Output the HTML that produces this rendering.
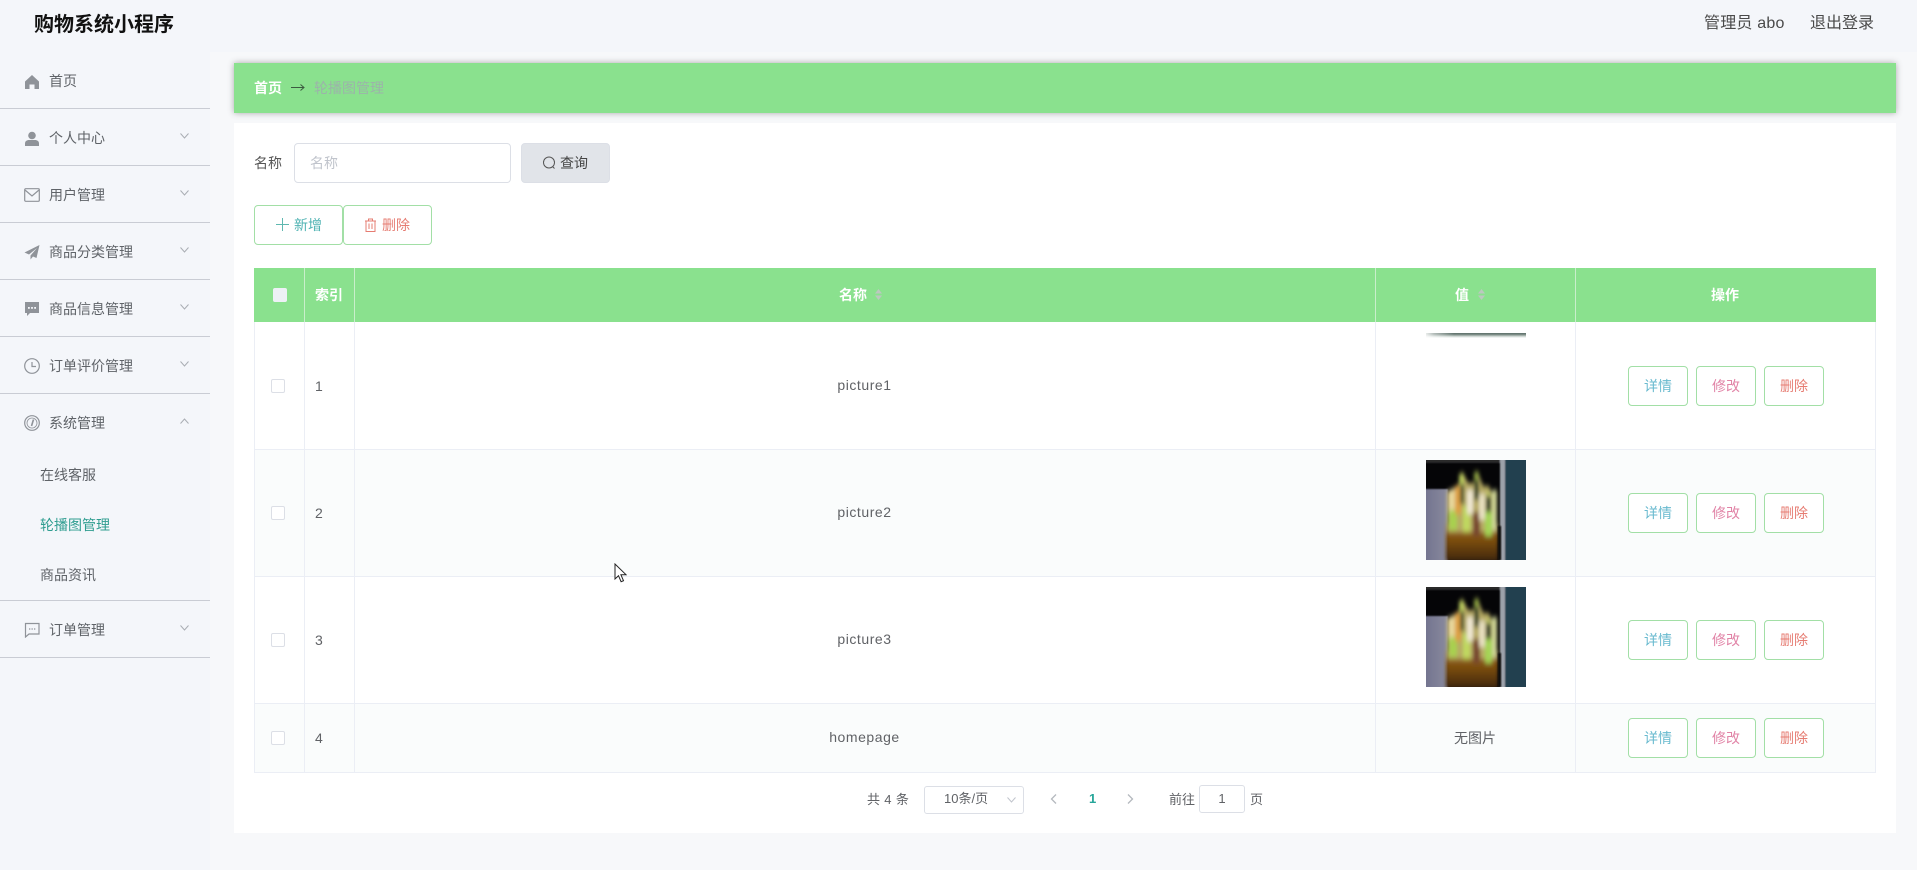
<!DOCTYPE html>
<html lang="zh"><head><meta charset="utf-8"><title>轮播图管理</title>
<style>
*{box-sizing:border-box}
html,body{margin:0;padding:0;width:1917px;height:870px;overflow:hidden;background:#f4f6fa;font-family:"Liberation Sans","Noto Sans CJK SC",sans-serif}
div,span,svg{position:absolute}
.t{white-space:nowrap;height:20px;line-height:20px;font-size:14px;color:#606266}
.c{text-align:center}
.lat{letter-spacing:.55px}
.m{left:49px;color:#5f6368}
.l{left:0;width:210px;height:1px;background:#c9ccd4}
.ic{left:24px;width:16px;height:16px;fill:#8f9399}
.ico{left:24px;width:16px;height:16px;fill:none;stroke:#8f9399;stroke-width:1.2}
.ch{left:180px;width:9px;height:6px;fill:none;stroke:#a9adb3;stroke-width:1}
.s{left:40px;color:#5f6368}
.v{width:1px;background:#ebeef5}
.h{left:254px;width:1622px;height:1px;background:#ebeef5}
.cb{left:271px;width:14px;height:14px;border:1px solid #dcdfe6;border-radius:2px;background:#fff}
.n{left:315px}
.b{width:60px;height:40px;border:1px solid #a2dfa6;border-radius:4px;background:#fff;text-align:center;line-height:38px;font-size:14px}
.b1{left:1628px;color:#69bacf}.b2{left:1696px;color:#e183a6}.b3{left:1764px;color:#e67c72}
.w{color:#fff;font-weight:700}
.sort{width:9px;height:11px;fill:#bcc8c0}
</style></head><body>
<svg width="0" height="0" style="left:0;top:0"><defs>
<filter id="bl" x="-20%" y="-20%" width="140%" height="140%"><feGaussianBlur stdDeviation="1.8 2.6"/></filter>
<filter id="bs" x="-20%" y="-20%" width="140%" height="140%"><feGaussianBlur stdDeviation="0.7"/></filter>
<linearGradient id="gy" x1="0" y1="0" x2="1" y2="0"><stop offset="0" stop-color="#71728e"/><stop offset="1" stop-color="#8a8b9e"/></linearGradient>
<linearGradient id="bw" x1="0" y1="0" x2="0" y2="1"><stop offset="0" stop-color="#a06a18"/><stop offset=".5" stop-color="#74480f"/><stop offset="1" stop-color="#3c2408"/></linearGradient>
<g id="food"><rect width="100" height="100" fill="#050507"/>
<g filter="url(#bs)"><rect x="-2" y="29" width="24" height="73" fill="url(#gy)"/><rect x="-2" y="-2" width="76" height="5" fill="#2a2a2c"/><rect x="74" y="-2" width="6" height="104" fill="#9da2aa"/><rect x="79" y="-2" width="23" height="104" fill="#23414f"/></g>
<g filter="url(#bl)"><rect x="20" y="64" width="52" height="38" fill="url(#bw)"/>
<path d="M21 32l12-8 3-13 6 12 6 0 3-13 6 16 6 0 2 6 6 4 0 36H21z" fill="#b7ab63"/>
<rect x="22" y="30" width="7" height="24" fill="#e6d59a"/>
<rect x="23" y="50" width="8" height="20" fill="#a8d050"/>
<rect x="29" y="26" width="6" height="28" fill="#dd9f42"/>
<rect x="33" y="14" width="5" height="11" fill="#b9cb5c"/>
<rect x="34" y="24" width="4" height="20" fill="#4d5530"/>
<rect x="37" y="46" width="7" height="26" fill="#c0d860"/>
<rect x="41" y="30" width="6" height="24" fill="#efe7d2"/>
<rect x="48" y="12" width="5" height="9" fill="#8aa040"/>
<rect x="48" y="20" width="5" height="20" fill="#3f4a2a"/>
<rect x="47" y="52" width="7" height="24" fill="#77462f"/>
<rect x="53" y="34" width="6" height="26" fill="#e8e0c0"/>
<rect x="60" y="32" width="5" height="6" fill="#c8d070"/>
<rect x="60" y="36" width="5" height="16" fill="#33402a"/>
<rect x="59" y="52" width="7" height="24" fill="#a4d455"/>
<rect x="66" y="30" width="5" height="40" fill="#cfd596"/></g>
<rect x="72" y="66" width="3" height="34" fill="#0a0a0a" filter="url(#bs)"/></g>
<g id="so"><path d="M4.500 0l3.500 4.500H1zM4.500 11L1 6.500h7z"/></g>
</defs></svg>

<div class="t" style="left:34px;top:13px;height:24px;line-height:24px;font-size:20px;font-weight:700;color:#111">购物系统小程序</div>
<div class="t" style="left:1704px;top:14px;font-size:16px;color:#4a4a4a;letter-spacing:.2px">管理员 abo</div>
<div class="t" style="left:1810px;top:14px;font-size:16px;color:#4a4a4a">退出登录</div>

<div style="left:210px;top:52px;width:1707px;height:818px;background:#f7f8fa"></div>

<svg class="ic" style="top:74px" viewBox="0 0 16 16"><path d="M8 1L1 7.500V15h4.500v-4.500h5V15H15V7.500z"/></svg>
<div class="t m" style="top:71px">首页</div><div class="l" style="top:108px"></div>
<svg class="ic" style="top:131px" viewBox="0 0 16 16"><circle cx="8" cy="4.500" r="3.800"/><path d="M1 15v-2.500C1 10 3 9 5 9h6c2 0 4 1 4 3.500V15z"/></svg>
<div class="t m" style="top:128px">个人中心</div><svg class="ch" style="top:133px" viewBox="0 0 9 6"><path d="M.5.500L4.500 5 8.500.500"/></svg><div class="l" style="top:165px"></div>
<svg class="ico" style="top:187px" viewBox="0 0 16 16"><rect x=".7" y="1.700" width="14.600" height="12.600" rx="1"/><path d="M1 3l7 6 7-6"/></svg>
<div class="t m" style="top:185px">用户管理</div><svg class="ch" style="top:190px" viewBox="0 0 9 6"><path d="M.5.500L4.500 5 8.500.500"/></svg><div class="l" style="top:222px"></div>
<svg class="ic" style="top:244px" viewBox="0 0 16 16"><path d="M15.500 1L.5 8.500 5 10.500 13 4 6.500 11.500V15.500L9 12.500 12.500 14z"/></svg>
<div class="t m" style="top:242px">商品分类管理</div><svg class="ch" style="top:247px" viewBox="0 0 9 6"><path d="M.5.500L4.500 5 8.500.500"/></svg><div class="l" style="top:279px"></div>
<svg class="ic" style="top:301px" viewBox="0 0 16 16"><path d="M1 1h14v11H6l-3 3v-3H1z"/><g fill="#f5f7fb"><rect x="4" y="6" width="1.800" height="1.800"/><rect x="7.100" y="6" width="1.800" height="1.800"/><rect x="10.200" y="6" width="1.800" height="1.800"/></g></svg>
<div class="t m" style="top:299px">商品信息管理</div><svg class="ch" style="top:304px" viewBox="0 0 9 6"><path d="M.5.500L4.500 5 8.500.500"/></svg><div class="l" style="top:336px"></div>
<svg class="ico" style="top:358px" viewBox="0 0 16 16"><circle cx="8" cy="8" r="7.300"/><path d="M8 4v4.500h4"/></svg>
<div class="t m" style="top:356px">订单评价管理</div><svg class="ch" style="top:361px" viewBox="0 0 9 6"><path d="M.5.500L4.500 5 8.500.500"/></svg><div class="l" style="top:393px"></div>
<svg class="ico" style="top:415px" viewBox="0 0 16 16"><circle cx="8" cy="8" r="7.300"/><circle cx="8" cy="8" r="5" stroke-width=".8"/><path d="M9.500 4.500L7.500 11" stroke-width="1.600"/></svg>
<div class="t m" style="top:413px">系统管理</div><svg class="ch" style="top:418px" viewBox="0 0 9 6"><path d="M.5 5.500L4.500 1 8.500 5.500"/></svg>
<div class="t s" style="top:465px">在线客服</div>
<div class="t s" style="top:515px;color:#2f9d90">轮播图管理</div>
<div class="t s" style="top:565px">商品资讯</div>
<div class="l" style="top:600px"></div>
<svg class="ico" style="top:622px" viewBox="0 0 16 16"><path d="M1.500 1.500h13.500v10.500H5l-3.500 3z"/><path d="M5 7h1.300M7.500 7h1.300M10 7h1.300" stroke-width="1.300"/></svg>
<div class="t m" style="top:620px">订单管理</div><svg class="ch" style="top:625px" viewBox="0 0 9 6"><path d="M.5.500L4.500 5 8.500.500"/></svg><div class="l" style="top:657px"></div>

<div style="left:234px;top:63px;width:1662px;height:50px;background:#8ae18e;box-shadow:0 0 6px rgba(70,70,70,.45)"></div>
<div class="t" style="left:254px;top:78px;color:#fff;font-weight:700">首页</div>
<svg style="left:291px;top:83px;width:14px;height:9px;fill:none;stroke:#3c5a40;stroke-width:1" viewBox="0 0 14 9"><path d="M0 4.500h13M9.500 1.500l3.500 3-3.500 3"/></svg>
<div class="t" style="left:314px;top:78px;color:#9cb3aa">轮播图管理</div>

<div style="left:234px;top:123px;width:1662px;height:710px;background:#fff"></div>
<div class="t" style="left:254px;top:153px;color:#555">名称</div>
<div style="left:294px;top:143px;width:217px;height:40px;border:1px solid #dcdfe6;border-radius:4px;background:#fff"></div>
<div class="t" style="left:310px;top:153px;color:#c0c4cc">名称</div>
<div style="left:521px;top:143px;width:89px;height:40px;border-radius:4px;background:#e1e4e9;border:1px solid #dcdfe6"></div>
<svg style="left:542px;top:156px;width:14px;height:14px;fill:none;stroke:#555;stroke-width:1" viewBox="0 0 14 14"><circle cx="7" cy="6.500" r="5.500"/><path d="M10.500 10.500l2 2"/></svg>
<div class="t" style="left:560px;top:153px;color:#444">查询</div>

<div style="left:254px;top:205px;width:89px;height:40px;border:1px solid #a2dfa6;border-radius:4px;background:#fff"></div>
<svg style="left:276px;top:218px;width:13px;height:13px;stroke:#5fb8b0;stroke-width:1;fill:none" viewBox="0 0 13 13"><path d="M6.500 0v13M0 6.500h13"/></svg>
<div class="t" style="left:294px;top:215px;color:#4fb3b3">新增</div>
<div style="left:343px;top:205px;width:89px;height:40px;border:1px solid #a2dfa6;border-radius:4px;background:#fff"></div>
<svg style="left:364px;top:218px;width:13px;height:14px;stroke:#e67c72;stroke-width:1;fill:none" viewBox="0 0 13 14"><path d="M1 3h11M4.500 3V1h4v2M2 3v10.500h9V3M5 5.500v5.500M8 5.500v5.500"/></svg>
<div class="t" style="left:382px;top:215px;color:#e67c72">删除</div>

<div style="left:254px;top:268px;width:1622px;height:54px;background:#8ae18e"></div>
<div class="v" style="left:304px;top:268px;height:54px;background:#c9eecb"></div>
<div class="v" style="left:354px;top:268px;height:54px;background:#c9eecb"></div>
<div class="v" style="left:1375px;top:268px;height:54px;background:#c9eecb"></div>
<div class="v" style="left:1575px;top:268px;height:54px;background:#c9eecb"></div>
<div style="left:273px;top:288px;width:14px;height:14px;background:#edf1f6;border-radius:2px"></div>
<div class="t w" style="left:315px;top:285px">索引</div>
<div class="t w" style="left:839px;top:285px">名称</div>
<svg class="sort" style="left:874px;top:289px" viewBox="0 0 9 11"><use href="#so"/></svg>
<div class="t w" style="left:1455px;top:285px">值</div>
<svg class="sort" style="left:1477px;top:289px" viewBox="0 0 9 11"><use href="#so"/></svg>
<div class="t w" style="left:1711px;top:285px">操作</div>

<div style="left:254px;top:450px;width:1622px;height:127px;background:#fafcfc"></div>
<div style="left:254px;top:704px;width:1622px;height:69px;background:#fafcfc"></div>
<div class="v" style="left:304px;top:322px;height:451px"></div>
<div class="v" style="left:354px;top:322px;height:451px"></div>
<div class="v" style="left:1375px;top:322px;height:451px"></div>
<div class="v" style="left:1575px;top:322px;height:451px"></div>
<div class="v" style="left:254px;top:322px;height:451px"></div>
<div class="v" style="left:1875px;top:322px;height:451px"></div>
<div class="h" style="top:449px"></div><div class="h" style="top:576px"></div><div class="h" style="top:703px"></div><div class="h" style="top:772px"></div>

<div class="cb" style="top:379px"></div><div class="t n" style="top:376px">1</div>
<div class="t c lat" style="left:354px;width:1021px;top:375px">picture1</div>
<div style="left:1426px;top:333px;width:100px;height:5px;background:linear-gradient(to right,rgba(255,255,255,.85) 0,rgba(255,255,255,.5) 8%,rgba(255,255,255,0) 28%),linear-gradient(#5a6e68 0,#7f8f89 35%,#c8d2cd 65%,#fff 100%)"></div>
<div class="b b1" style="top:366px">详情</div><div class="b b2" style="top:366px">修改</div><div class="b b3" style="top:366px">删除</div>

<div class="cb" style="top:506px"></div><div class="t n" style="top:503px">2</div>
<div class="t c lat" style="left:354px;width:1021px;top:502px">picture2</div>
<svg style="left:1426px;top:460px;width:100px;height:100px" viewBox="0 0 100 100"><use href="#food"/></svg>
<div class="b b1" style="top:493px">详情</div><div class="b b2" style="top:493px">修改</div><div class="b b3" style="top:493px">删除</div>

<div class="cb" style="top:633px"></div><div class="t n" style="top:630px">3</div>
<div class="t c lat" style="left:354px;width:1021px;top:629px">picture3</div>
<svg style="left:1426px;top:587px;width:100px;height:100px" viewBox="0 0 100 100"><use href="#food"/></svg>
<div class="b b1" style="top:620px">详情</div><div class="b b2" style="top:620px">修改</div><div class="b b3" style="top:620px">删除</div>

<div class="cb" style="top:731px"></div><div class="t n" style="top:728px">4</div>
<div class="t c lat" style="left:354px;width:1021px;top:727px">homepage</div>
<div class="t c" style="left:1375px;width:200px;top:728px">无图片</div>
<div class="b b1" style="top:718px">详情</div><div class="b b2" style="top:718px">修改</div><div class="b b3" style="top:718px">删除</div>

<div class="t" style="left:867px;top:790px;font-size:13px;letter-spacing:.35px">共 4 条</div>
<div style="left:924px;top:786px;width:100px;height:28px;border:1px solid #dcdfe6;border-radius:3px;background:#fff"></div>
<div class="t" style="left:944px;top:789px;font-size:13px">10条/页</div>
<svg style="left:1007px;top:797px;width:9px;height:6px;fill:none;stroke:#c0c4cc;stroke-width:1" viewBox="0 0 9 6"><path d="M.5.500L4.500 5 8.500.500"/></svg>
<svg style="left:1050px;top:794px;width:7px;height:10px;fill:none;stroke:#b4b8be;stroke-width:1.300" viewBox="0 0 7 10"><path d="M6 .500L1.500 5 6 9.500"/></svg>
<div class="t" style="left:1089px;top:789px;font-size:13px;font-weight:700;color:#26a69a">1</div>
<svg style="left:1127px;top:794px;width:7px;height:10px;fill:none;stroke:#b4b8be;stroke-width:1.300" viewBox="0 0 7 10"><path d="M1 .500L5.500 5 1 9.500"/></svg>
<div class="t" style="left:1169px;top:790px;font-size:13px">前往</div>
<div style="left:1199px;top:785px;width:46px;height:28px;border:1px solid #dcdfe6;border-radius:3px;background:#fff;text-align:center;font-size:13px;line-height:26px;color:#606266">1</div>
<div class="t" style="left:1250px;top:790px;font-size:13px">页</div>

<svg style="left:614px;top:563px;width:13px;height:20px" viewBox="0 0 13 20"><path d="M1 1v15l3.500-3.300 2.600 6 2.400-1-2.600-6H12z" fill="#fff" stroke="#222" stroke-width="1"/></svg>
</body></html>
